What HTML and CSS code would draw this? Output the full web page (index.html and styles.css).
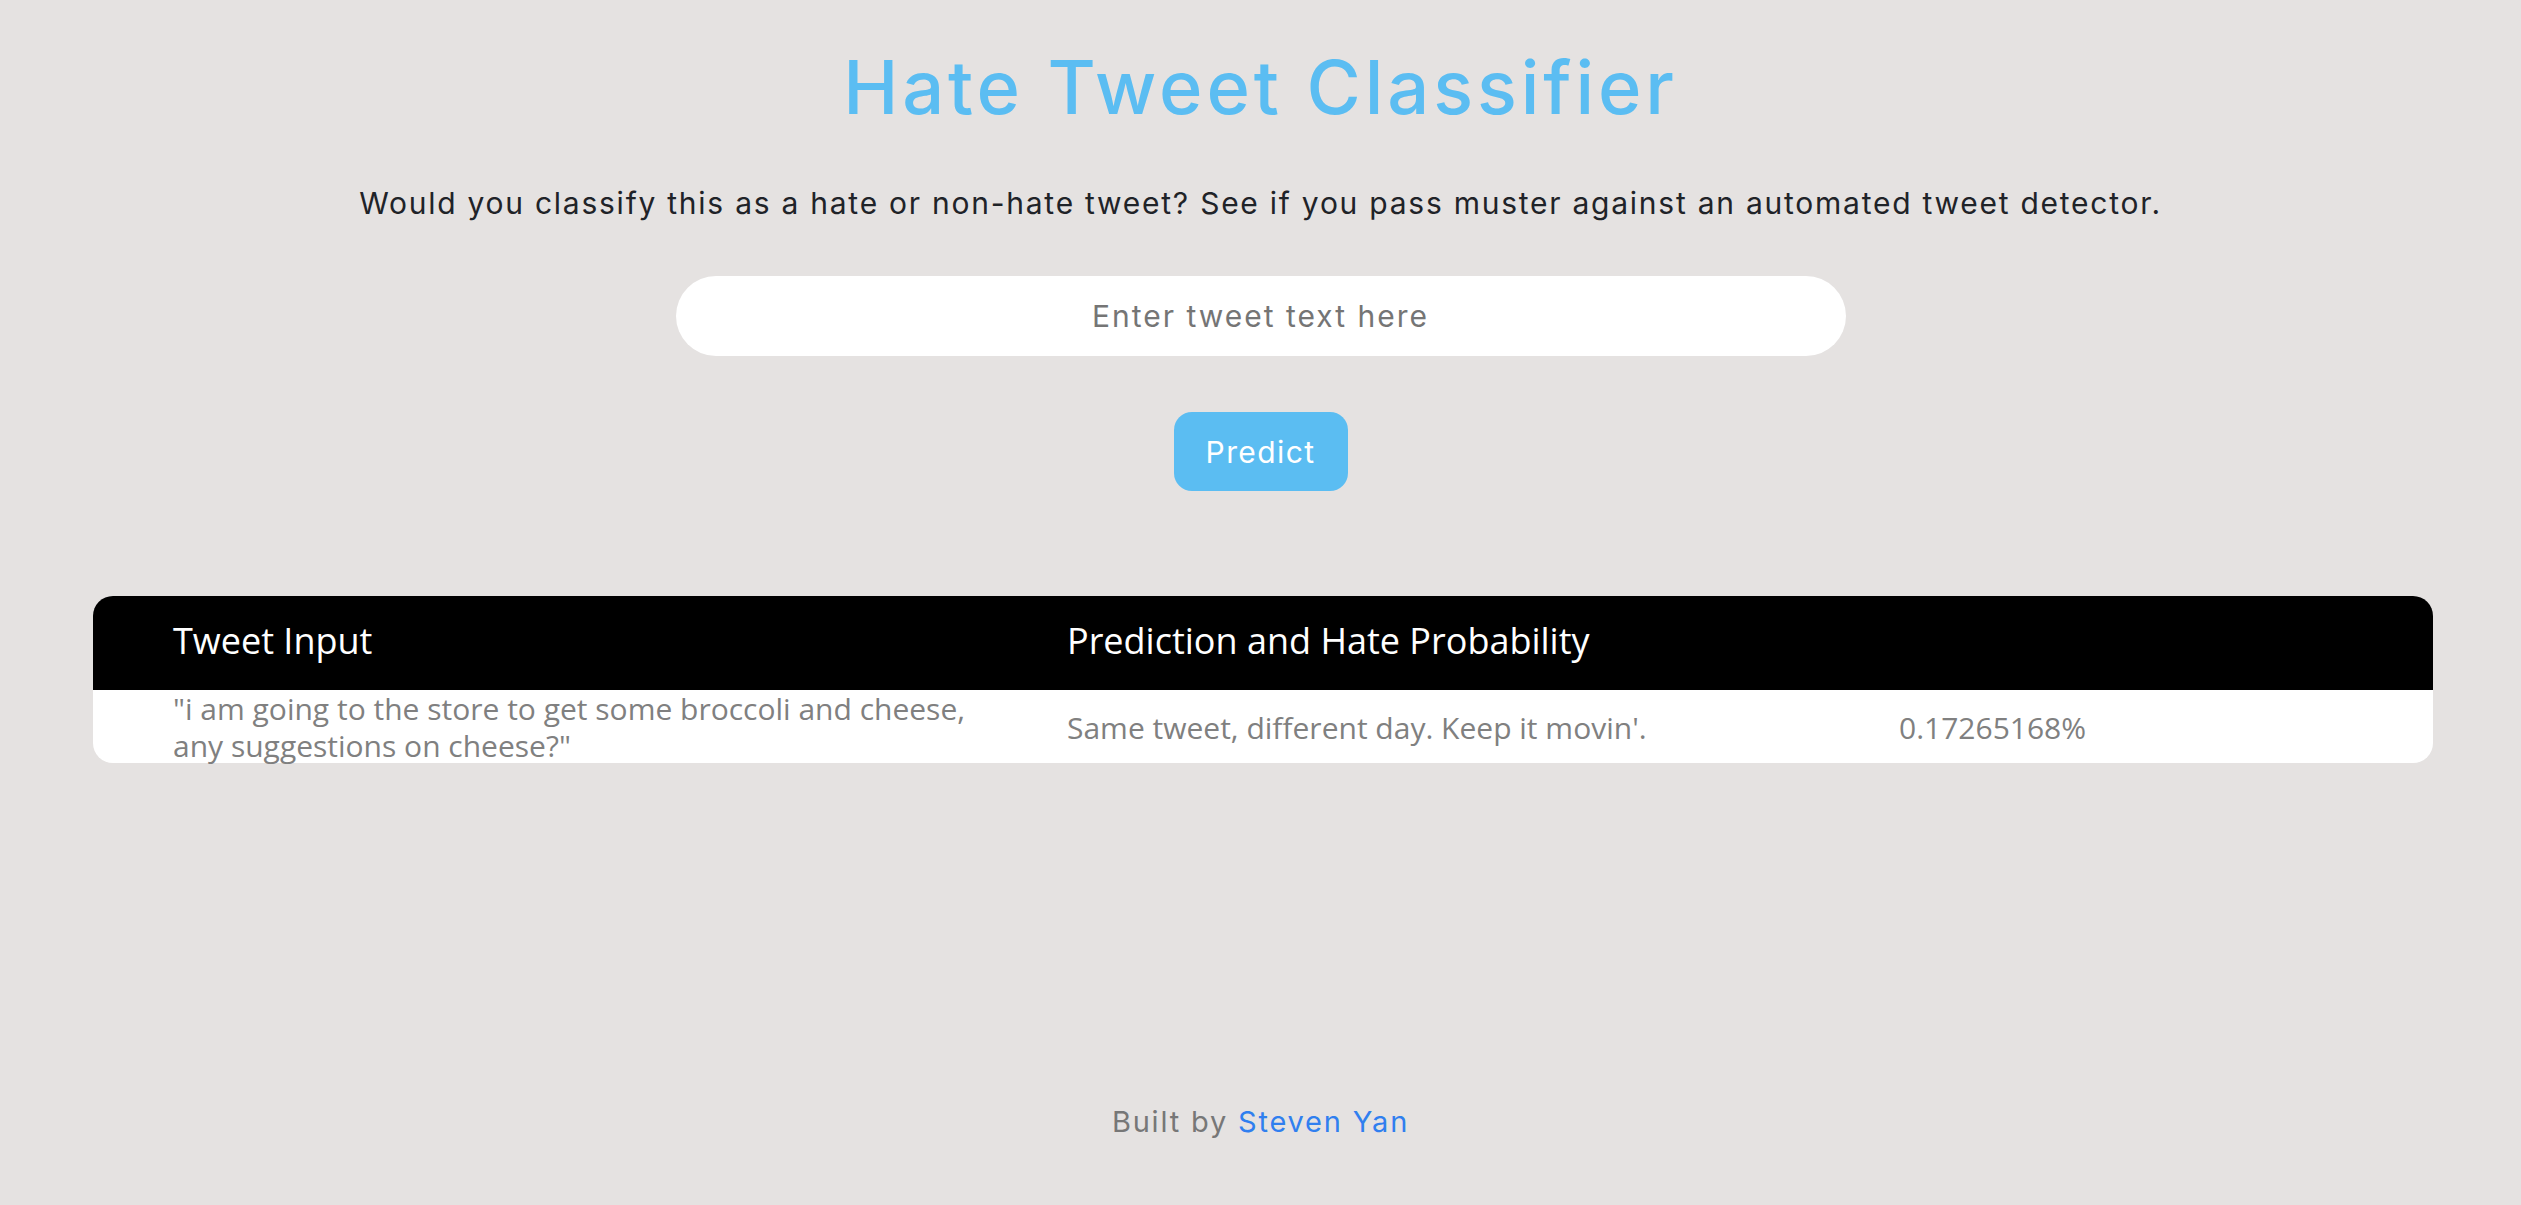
FILE: index.html
```html
<!DOCTYPE html>
<html lang="en">
<head>
<meta charset="utf-8">
<title>Hate Tweet Classifier</title>
<link rel="stylesheet" href="styles.css">
</head>
<body>
<div class="page">
  <h1 class="title">Hate Tweet Classifier</h1>
  <p class="subtitle">Would you classify this as a hate or non-hate tweet? See if you pass muster against an automated tweet detector.</p>
  <input class="tweet-input" type="text" placeholder="Enter tweet text here">
  <button class="predict">Predict</button>
  <div class="results">
    <div class="row head">
      <div class="cell">Tweet Input</div>
      <div class="cell span2">Prediction and Hate Probability</div>
    </div>
    <div class="row body-row">
      <div class="cell">"i am going to the store to get some broccoli and cheese, any suggestions on cheese?"</div>
      <div class="cell">Same tweet, different day. Keep it movin'.</div>
      <div class="cell">0.17265168%</div>
    </div>
  </div>
  <footer class="footer">Built by <a class="author" href="#">Steven Yan</a></footer>
</div>
</body>
</html>
```

FILE: styles.css
```css
html, body {
  margin: 0;
  padding: 0;
}
body {
  background: #e5e2e1;
  font-family: Inter, "Liberation Sans", sans-serif;
}
.page {
  min-height: 1205px;
  display: flex;
  flex-direction: column;
  align-items: center;
  box-sizing: border-box;
}
.title {
  margin: 42px 0 0;
  font-size: 74px;
  line-height: 90px;
  font-weight: 500;
  letter-spacing: 3.9px;
  color: #5bbdf2;
}
.subtitle {
  margin: 51px 0 0;
  font-size: 30px;
  line-height: 40px;
  letter-spacing: 1.75px;
  color: #1f2328;
}
.tweet-input {
  margin-top: 53px;
  width: 1170px;
  height: 80px;
  box-sizing: border-box;
  border: none;
  border-radius: 40px;
  background: #fff;
  text-align: center;
  font-family: Inter, "Liberation Sans", sans-serif;
  font-size: 30px;
  letter-spacing: 2px;
  color: #333;
  outline: none;
}
.tweet-input::placeholder {
  color: #757575;
}
.predict {
  margin-top: 56px;
  width: 174px;
  height: 79px;
  border: none;
  border-radius: 18px;
  background: #5bbdf2;
  color: #fff;
  font-family: Inter, "Liberation Sans", sans-serif;
  font-size: 30px;
  letter-spacing: 1.4px;
}
.results {
  margin-top: 105px;
  margin-left: 5px;
  width: 2340px;
  font-family: "Open Sans", sans-serif;
}
.row {
  display: grid;
  grid-template-columns: 894px 832px 1fr;
  align-items: center;
}
.cell {
  padding-left: 80px;
}
.span2 {
  grid-column: span 2;
}
.head {
  height: 94px;
  box-sizing: border-box;
  padding-bottom: 6px;
  background: #000;
  color: #fff;
  font-size: 36px;
  border-radius: 20px 20px 0 0;
}
.body-row {
  height: 73px;
  background: #fff;
  color: #808080;
  font-size: 30px;
  line-height: 37px;
  border-radius: 0 0 20px 20px;
}
.footer {
  margin-top: auto;
  margin-bottom: 63px;
  font-size: 29px;
  line-height: 40px;
  letter-spacing: 1.8px;
  color: #777;
}
.author {
  color: #307fef;
  text-decoration: none;
}
```
